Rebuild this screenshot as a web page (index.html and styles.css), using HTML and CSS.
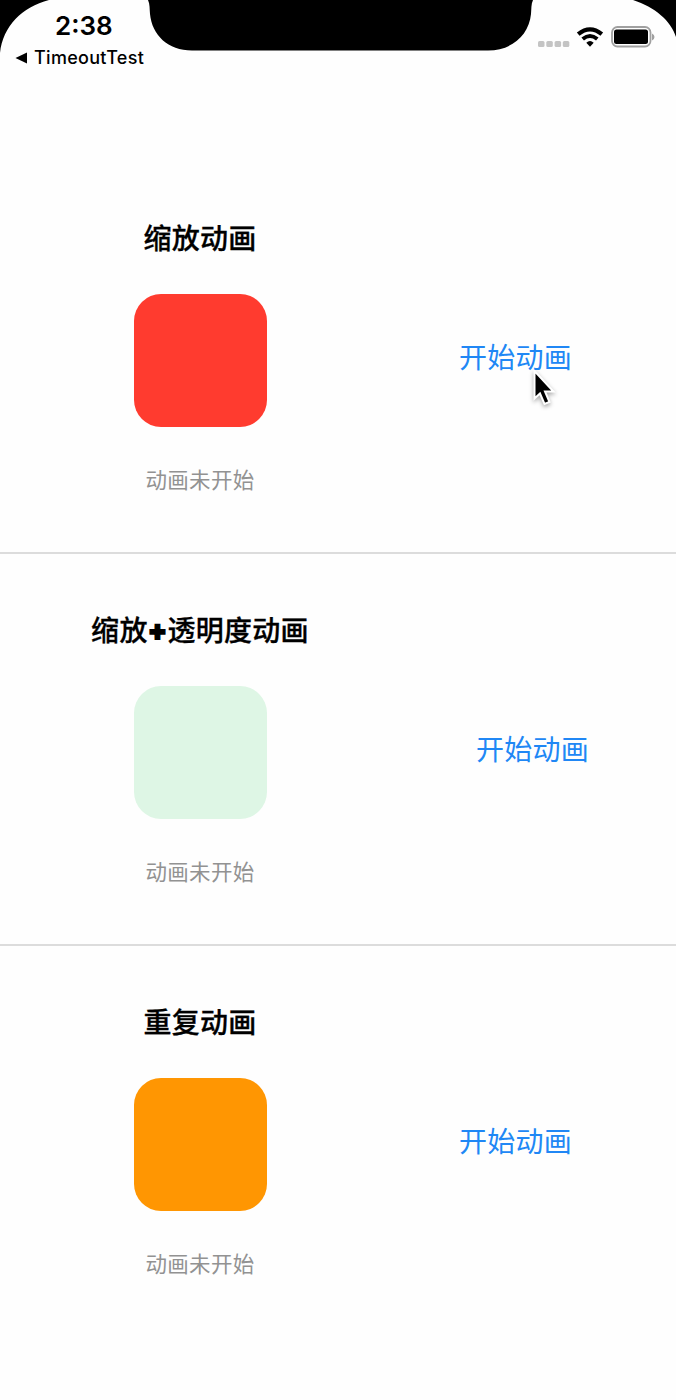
FILE: index.html
```
<!DOCTYPE html>
<html lang="zh-Hans">
<head>
    <meta charset="UTF-8">
    <meta name="viewport" content="width=device-width, initial-scale=1.0">
    <title>动画</title>
    <link rel="stylesheet" href="styles.css">
</head>
<body>
    <header class="status-bar">
        <!-- 圆角和刘海 -->
        <svg class="bezel" width="676" height="62" viewBox="0 0 676 62">
            <path d="M0 0H49C22 7 3 26 0 53Z"/>
            <path d="M676 0H633C655 7 671 21 676 37Z"/>
            <path d="M148 0C150 4 149.500 9 150 14C152 35 168 50.500 192 50.500H488C512 50.500 529 35 531 14C531.500 9 531 4 533 0Z"/>
        </svg>
        <div class="status-left">
            <div class="time">2:38</div>
            <div class="back">
                <svg width="13" height="12" viewBox="0 0 13 12"><path d="M0.500 6L12 0.500V11.500Z"/></svg>
                <span>TimeoutTest</span>
            </div>
        </div>
        <div class="status-right">
            <svg class="signal" width="32" height="6" viewBox="0 0 32 6">
                <rect x="0" width="6.500" height="6" rx="1.500"/>
                <rect x="8.300" width="6.500" height="6" rx="1.500"/>
                <rect x="16.600" width="6.500" height="6" rx="1.500"/>
                <rect x="24.800" width="6.500" height="6" rx="1.500"/>
            </svg>
            <svg class="wifi" width="28" height="21" viewBox="0 0 28 21">
                <path d="M2.200 7.200Q14 -2.400 25.800 7.200" stroke-width="4.200"/>
                <path d="M6.700 12Q14 6 21.300 12" stroke-width="4"/>
                <path class="dot" d="M10.300 15.700Q14 12.500 17.700 15.700L14 19.700Z"/>
            </svg>
            <svg class="battery" width="44" height="22" viewBox="0 0 44 22">
                <rect class="shell" x="1" y="1" width="38.500" height="19.500" rx="5.500"/>
                <rect x="3" y="3.500" width="34" height="14.500" rx="2.500"/>
                <path class="cap" d="M41 7.500Q43.500 8.500 43.500 11T41 14.500Z"/>
            </svg>
        </div>
    </header>

    <main>
        <section class="row">
            <div class="demo">
                <h2>缩放动画</h2>
                <div class="box red"></div>
                <p>动画未开始</p>
            </div>
            <div class="action">
                <button>开始动画</button>
                <svg class="cursor" width="24" height="38" viewBox="0 0 24 38">
                    <path d="M1.500 1V28.500L7 23.500L11.500 34L16.500 32L12 21.500H20.500Z"/>
                </svg>
            </div>
        </section>
        <section class="row">
            <div class="demo">
                <h2>缩放<b>+</b>透明度动画</h2>
                <div class="box green"></div>
                <p>动画未开始</p>
            </div>
            <div class="action wide">
                <button>开始动画</button>
            </div>
        </section>
        <section class="row">
            <div class="demo">
                <h2>重复动画</h2>
                <div class="box orange"></div>
                <p>动画未开始</p>
            </div>
            <div class="action">
                <button>开始动画</button>
            </div>
        </section>
    </main>
</body>
</html>
```

FILE: styles.css
```
* {
    box-sizing: border-box;
}
body {
    margin: 0;
    min-height: 1400px;
    background-color: #fefefe;
    font-family: Inter, "Noto Sans CJK SC", sans-serif;
    color: #000;
}
svg {
    display: block;
}
.status-bar {
    position: relative;
    display: flex;
    justify-content: space-between;
    height: 162px;
    padding: 10px 21px 0 15px;
}
.bezel {
    position: absolute;
    top: 0;
    left: 0;
}
.time {
    padding-left: 40px;
    font-size: 26px;
    font-weight: 600;
    line-height: 32px;
}
.back {
    display: flex;
    align-items: center;
    gap: 6px;
    margin-top: 5px;
    font-size: 18px;
    font-weight: 500;
    line-height: 22px;
    letter-spacing: 0.3px;
}
.status-right {
    display: flex;
    align-items: center;
    height: 54px;
}
.signal {
    margin: 13px 6px 0 0;
    fill: #c4c4c4;
}
.wifi {
    margin-right: 7px;
    fill: none;
    stroke: #000;
}
.wifi .dot {
    fill: #000;
    stroke: none;
}
.battery .shell {
    fill: none;
    stroke: #a0a0a0;
    stroke-width: 1.8;
}
.battery .cap {
    fill: #a0a0a0;
}
.row {
    display: flex;
    align-items: center;
    height: 392px;
    border-bottom: 2px solid #dcdcdc;
}
.row:last-child {
    border-bottom-color: transparent;
}
.demo {
    display: flex;
    flex-direction: column;
    align-items: center;
    width: 400px;
    padding-bottom: 2px;
}
h2 {
    margin: 0;
    padding-top: 2px;
    font-size: 28px;
    font-weight: 500;
    line-height: 34px;
    letter-spacing: 0.3px;
    -webkit-text-stroke: 0.3px #000;
}
h2 b {
    position: relative;
    top: -1px;
    font-weight: 900;
    -webkit-text-stroke: 1.4px #000;
}
.box {
    width: 133px;
    height: 133px;
    margin: 38px 0 40px 1px;
    border-radius: 27px;
}
.red {
    background-color: #ff3b2f;
}
.green {
    background-color: #def6e5;
}
.orange {
    background-color: #ff9602;
}
p {
    margin: 0;
    padding-top: 1px;
    font-size: 21.5px;
    line-height: 24px;
    letter-spacing: 0.3px;
    color: #929292;
}
.action {
    position: relative;
    width: 231px;
    padding-top: 1px;
    text-align: center;
}
.wide {
    width: 265px;
}
button {
    padding: 0;
    border: 0;
    background: none;
    font-family: inherit;
    font-size: 28px;
    line-height: 34px;
    letter-spacing: 0.3px;
    color: #2087f5;
}
.cursor {
    position: absolute;
    top: 30px;
    left: 133px;
    stroke: #fff;
    stroke-width: 2;
    filter: drop-shadow(0 2px 2px rgba(0, 0, 0, 0.35));
}
```
